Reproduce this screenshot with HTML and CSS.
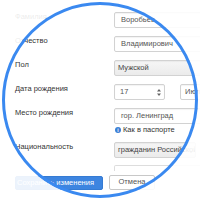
FILE: index.html
```html
<!DOCTYPE html>
<html lang="ru">
<head>
<meta charset="utf-8">
<link rel="stylesheet" href="styles.css">
</head>
<body>
<div class="form">
  <div class="row">
    <div class="label">Фамилия</div>
    <div class="ctrl"><div class="input">Воробьев</div></div>
  </div>
  <div class="row">
    <div class="label">Отчество</div>
    <div class="ctrl"><div class="input">Владимирович</div></div>
  </div>
  <div class="row">
    <div class="label">Пол</div>
    <div class="ctrl"><div class="select">Мужской</div></div>
  </div>
  <div class="row">
    <div class="label">Дата рождения</div>
    <div class="ctrl date">
      <div class="input day">17
        <svg class="spin" width="4" height="7" viewBox="0 0 4 7"><path d="M2 0 L4 2.6 L0 2.6 Z M2 7 L4 4.4 L0 4.4 Z" fill="#666"/></svg>
      </div>
      <div class="input month">Июль</div>
    </div>
  </div>
  <div class="row place">
    <div class="label">Место рождения</div>
    <div class="ctrl"><div class="input">гор. Ленинград</div></div>
  </div>
  <div class="row help">
    <div class="label"></div>
    <div class="ctrl hint"><span class="info">i</span>Как в паспорте</div>
  </div>
  <div class="row">
    <div class="label">Национальность</div>
    <div class="ctrl"><div class="select nat">гражданин Российской Федерации
      <svg class="spin2" width="4" height="7" viewBox="0 0 4 7"><path d="M0.5 2.5 L2 1 L3.5 2.5 M0.5 4.5 L2 6 L3.5 4.5" fill="none" stroke="#aaa" stroke-width="0.8"/></svg>
    </div></div>
  </div>
  <div class="row ghostrow">
    <div class="label"></div>
    <div class="ctrl"><div class="ghost"></div></div>
  </div>
  <div class="actions">
    <div class="btn primary">Сохранить изменения</div>
    <div class="btn cancel">Отмена</div>
  </div>
</div>
<div class="lens"></div>
</body>
</html>
```
FILE: styles.css
```css
html, body {
  margin: 0;
  padding: 0;
  background: #fff;
}
body {
  width: 200px;
  height: 200px;
  overflow: hidden;
  position: relative;
  font-family: "Liberation Sans", Arial, sans-serif;
  font-size: 7.5px;
  color: #333;
}
.form {
  padding-top: 12px;
  padding-left: 15px;
  width: 230px;
}
.row {
  display: grid;
  grid-template-columns: 99px 1fr;
  margin-bottom: 8px;
}
.label {
  line-height: 10px;
  white-space: nowrap;
  color: #333;
}
.input, .select {
  box-sizing: border-box;
  height: 16px;
  line-height: 14px;
  border: 1px solid #d2d2d2;
  border-radius: 2px;
  background: #fff;
  color: #555;
  padding-left: 6px;
  white-space: nowrap;
  overflow: hidden;
  box-shadow: inset 0 1px 1px rgba(0,0,0,0.05);
}
.select {
  padding-left: 3px;
  background: linear-gradient(#f6f6f6, #ebebeb);
  color: #444;
}
.date {
  display: flex;
  gap: 15px;
}
.day {
  width: 51px;
  padding-left: 5px;
  position: relative;
}
.spin {
  position: absolute;
  right: 3px;
  top: 4px;
}
.month {
  width: 60px;
  padding-left: 4px;
}
.row.place {
  margin-bottom: 1px;
}
.row.help {
  margin-bottom: 8px;
}
.hint {
  display: flex;
  align-items: center;
  height: 9px;
  line-height: 9px;
  color: #333;
}
.info {
  display: inline-flex;
  align-items: center;
  justify-content: center;
  width: 6px;
  height: 6px;
  border-radius: 50%;
  background: #3a7fd5;
  color: #fff;
  font-size: 5px;
  font-weight: bold;
  line-height: 6px;
  margin-left: 1px;
  margin-right: 2px;
}
.nat {
  width: 82px;
  position: relative;
  padding-right: 8px;
}
.spin2 {
  position: absolute;
  right: 2px;
  top: 4px;
}
.row.ghostrow {
  margin-top: -1px;
  margin-bottom: 4px;
}
.ghost {
  box-sizing: border-box;
  height: 6px;
  border: 1px solid #ddd;
  border-bottom: none;
  border-radius: 2px 2px 0 0;
}
.actions {
  display: flex;
  gap: 6px;
  align-items: center;
}
.btn {
  box-sizing: border-box;
  height: 14px;
  line-height: 12px;
  border-radius: 2px;
  white-space: nowrap;
}
.primary {
  width: 88px;
  background: #3d85e0;
  border: 1px solid #357bd3;
  color: #fff;
  text-align: right;
  padding-right: 8px;
}
.cancel {
  width: 46px;
  height: 15px;
  background: #fff;
  border: 1px solid #c8c8c8;
  color: #555;
  text-align: center;
}
.lens {
  position: absolute;
  left: 2px;
  top: 2px;
  width: 196px;
  height: 196px;
  box-sizing: border-box;
  border: 3px solid #3a89f0;
  border-radius: 50%;
  box-shadow: 0 0 0 200px rgba(255,255,255,0.9);
}
```
